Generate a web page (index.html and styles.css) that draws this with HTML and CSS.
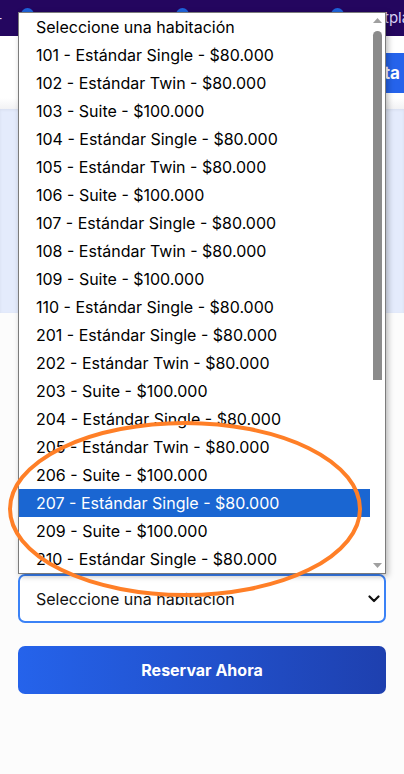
FILE: index.html
```html
<!DOCTYPE html>
<html lang="es">
<head>
<meta charset="utf-8">
<title>Reserva</title>
<link rel="stylesheet" href="styles.css">
</head>
<body>
<div class="page">
  <nav class="topbar">
    <span class="dash">-</span>
    <span class="dot dot1"></span>
    <span class="dot dot2"></span>
    <span class="dot dot3"></span>
    <span class="brand">tplan</span>
  </nav>
  <header class="header">
    <a class="cta">Consulta</a>
  </header>
  <section class="hero"></section>
  <form class="form">
    <div class="select-wrap">
      <select class="select">
        <option>Seleccione una habitación</option>
      </select>
      <svg class="chev" width="12" height="8" viewBox="0 0 12 8"><path d="M1.5 1.5 L6 6 L10.5 1.5" fill="none" stroke="#111" stroke-width="2.2" stroke-linecap="round" stroke-linejoin="round"/></svg>
    </div>
    <button type="button" class="submit">Reservar Ahora</button>
  </form>

  <div class="popup">
    <ul class="list">
      <li>Seleccione una habitación</li>
      <li>101 - Estándar Single - $80.000</li>
      <li>102 - Estándar Twin - $80.000</li>
      <li>103 - Suite - $100.000</li>
      <li>104 - Estándar Single - $80.000</li>
      <li>105 - Estándar Twin - $80.000</li>
      <li>106 - Suite - $100.000</li>
      <li>107 - Estándar Single - $80.000</li>
      <li>108 - Estándar Twin - $80.000</li>
      <li>109 - Suite - $100.000</li>
      <li>110 - Estándar Single - $80.000</li>
      <li>201 - Estándar Single - $80.000</li>
      <li>202 - Estándar Twin - $80.000</li>
      <li>203 - Suite - $100.000</li>
      <li>204 - Estándar Single - $80.000</li>
      <li>205 - Estándar Twin - $80.000</li>
      <li>206 - Suite - $100.000</li>
      <li class="active">207 - Estándar Single - $80.000</li>
      <li>209 - Suite - $100.000</li>
      <li>210 - Estándar Single - $80.000</li>
    </ul>
    <div class="scrollbar">
      <svg class="arrow" width="15" height="14" viewBox="0 0 15 14"><path d="M3 10 L7.5 5 L12 10 Z" fill="#a0a0a0"/></svg>
      <div class="track"><div class="thumb"></div></div>
      <svg class="arrow" width="15" height="14" viewBox="0 0 15 14"><path d="M3 4 L7.5 9 L12 4 Z" fill="#a0a0a0"/></svg>
    </div>
  </div>

  <svg class="mark" width="404" height="774" viewBox="0 0 404 774">
    <ellipse cx="185" cy="509" rx="175" ry="86" fill="none" stroke="#ff7f27" stroke-width="4"/>
  </svg>
</div>
</body>
</html>
```

FILE: styles.css
```css
* { box-sizing: border-box; }
html, body { margin: 0; padding: 0; }
body {
  font-family: Inter, "Noto Sans", Arial, sans-serif;
  background: #fcfcfc;
  width: 404px;
  height: 774px;
  overflow: hidden;
}
.page { position: relative; width: 404px; height: 774px; }

.topbar {
  height: 36px;
  background: #24065f;
  display: flex;
  align-items: flex-start;
  overflow: hidden;
  white-space: nowrap;
}
.dash { color: #dcd6ff; font-size: 14px; line-height: 36px; margin-left: -4px; width: 4px; }
.dot { width: 13px; height: 13px; border-radius: 50%; background: #1e63dc; margin-top: 8px; flex: none; }
.dot1 { margin-left: 21px; }
.dot2 { margin-left: 142px; }
.dot3 { margin-left: 142px; }
.brand { color: #d8d2f5; font-size: 15px; line-height: 36px; margin-left: 40px; }

.header {
  height: 73px;
  background: linear-gradient(#ffffff 0, #ffffff 62px, #f2f2f4 73px);
  display: flex;
  align-items: center;
  justify-content: flex-end;
  overflow: hidden;
}
.cta {
  background: #2563eb;
  color: #fff;
  font-weight: 700;
  font-size: 17px;
  height: 40px;
  line-height: 40px;
  padding: 0 14px 0 14px;
  margin-right: -10px;
  border-radius: 6px;
  white-space: nowrap;
}

.hero {
  height: 204px;
  background: #e4ebfc;
  box-shadow: inset 0 1px 3px rgba(0,0,0,0.06);
}

.form {
  padding: 261px 18px 0;
  display: flex;
  flex-direction: column;
  gap: 23px;
}
.select-wrap { position: relative; }
.select {
  appearance: none;
  -webkit-appearance: none;
  width: 100%;
  height: 49px;
  border: 2px solid #3b82f6;
  border-radius: 7px;
  background: #fff;
  font-family: inherit;
  font-size: 16px;
  color: #111;
  padding: 0 0 0 16px;
  outline: none;
}
.chev { position: absolute; right: 6px; top: 21px; }
.submit {
  height: 48px;
  border: none;
  border-radius: 7px;
  background: linear-gradient(90deg, #2563eb, #1e40af);
  color: #fff;
  font-family: inherit;
  font-weight: 700;
  font-size: 16px;
}

.popup {
  position: absolute;
  left: 18px;
  top: 12px;
  width: 368px;
  height: 562px;
  background: #fff;
  border: 1px solid #7c7c7c;
  box-shadow: 2px 2px 6px rgba(0,0,0,0.28);
  display: flex;
  overflow: hidden;
}
.list {
  list-style: none;
  margin: 0;
  padding: 0;
  width: 351px;
  font-size: 16px;
  color: #000;
}
.list li {
  height: 28px;
  line-height: 28px;
  padding-left: 17px;
  white-space: nowrap;
}
.list li.active { background: #1a66d2; color: #fff; }
.scrollbar {
  width: 15px;
  display: flex;
  flex-direction: column;
  background: #fff;
}
.arrow { display: block; flex: none; }
.track { flex: 1; padding: 4px 3px 0; }
.thumb { width: 9px; height: 349px; background: #8b8b8b; border-radius: 5px 5px 0 0; }

.mark { position: absolute; left: 0; top: 0; pointer-events: none; }
```
